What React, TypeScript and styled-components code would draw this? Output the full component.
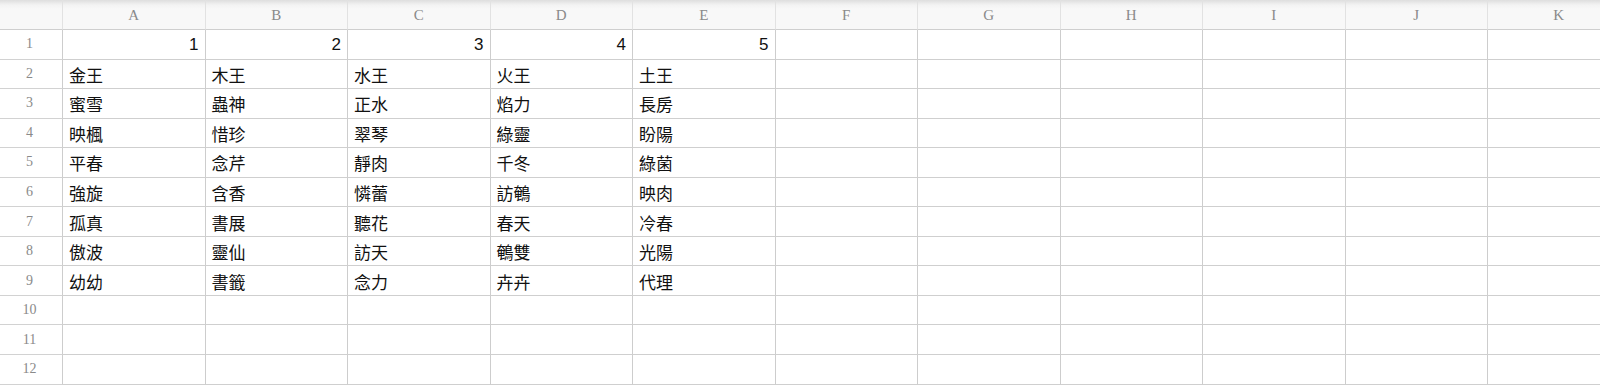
import React from 'react'
import styled, { createGlobalStyle } from 'styled-components'

const GlobalStyle = createGlobalStyle`
html, body {
  margin: 0;
  padding: 0;
  background: #fff;
  overflow: hidden;
}
`

const Sheet = styled.div`
width: 1600px;
height: 386px;
overflow: hidden;
display: grid;
grid-template-columns: 63px repeat(11, 142.5px);
grid-template-rows: 30px repeat(12, 29.55px);
background: #fff;
`

const Corner = styled.div`
background: linear-gradient(to bottom, #dedede 0px, #f3f3f3 5px, #f8f8f8 9px);
border-right: 1px solid #e2e2e2;
border-bottom: 1px solid #cfcfcf;
`

const ColHead = styled.div`
background: linear-gradient(to bottom, #dedede 0px, #f3f3f3 5px, #f8f8f8 9px);
border-right: 1px solid #e2e2e2;
border-bottom: 1px solid #cfcfcf;
display: flex;
align-items: center;
justify-content: center;
font-family: "Liberation Serif", serif;
font-size: 15px;
color: #8a8a8a;
padding-top: 2px;
box-sizing: border-box;
`

const RowHead = styled.div`
background: #fff;
border-right: 1px solid #cdcdcd;
border-bottom: 1px solid #d2d2d2;
display: flex;
align-items: center;
justify-content: center;
font-family: "Liberation Serif", serif;
font-size: 14px;
color: #8a8a8a;
padding-right: 3px;
box-sizing: border-box;
`

const Cell = styled.div<{ $num?: boolean }>`
border-right: 1px solid #cdcdcd;
border-bottom: 1px solid #cfcfcf;
display: flex;
align-items: center;
justify-content: ${p => (p.$num ? 'flex-end' : 'flex-start')};
padding: 1px 6px 0 6px;
box-sizing: border-box;
font-family: "Liberation Sans", "Noto Sans CJK TC", sans-serif;
font-size: 17px;
color: #111;
white-space: nowrap;
overflow: hidden;
`

const cols = ['A', 'B', 'C', 'D', 'E', 'F', 'G', 'H', 'I', 'J', 'K']

const data: (string | number)[][] = [
  [1, 2, 3, 4, 5],
  ['金王', '木王', '水王', '火王', '土王'],
  ['蜜雪', '蟲神', '正水', '焰力', '長房'],
  ['映楓', '惜珍', '翠琴', '綠靈', '盼陽'],
  ['平春', '念芹', '靜肉', '千冬', '綠菌'],
  ['強旋', '含香', '憐蕾', '訪鵪', '映肉'],
  ['孤真', '書展', '聽花', '春天', '冷春'],
  ['傲波', '靈仙', '訪天', '鵪雙', '光陽'],
  ['幼幼', '書籤', '念力', '卉卉', '代理'],
  [],
  [],
  [],
]

export default function App() {
  return (
    <>
      <GlobalStyle />
      <Sheet>
        <Corner />
        {cols.map(c => (
          <ColHead key={c}>{c}</ColHead>
        ))}
        {data.map((row, r) => (
          <React.Fragment key={r}>
            <RowHead>{r + 1}</RowHead>
            {cols.map((c, i) => {
              const v = row[i]
              return (
                <Cell key={c} $num={typeof v === 'number'}>
                  {v ?? ''}
                </Cell>
              )
            })}
          </React.Fragment>
        ))}
      </Sheet>
    </>
  )
}
